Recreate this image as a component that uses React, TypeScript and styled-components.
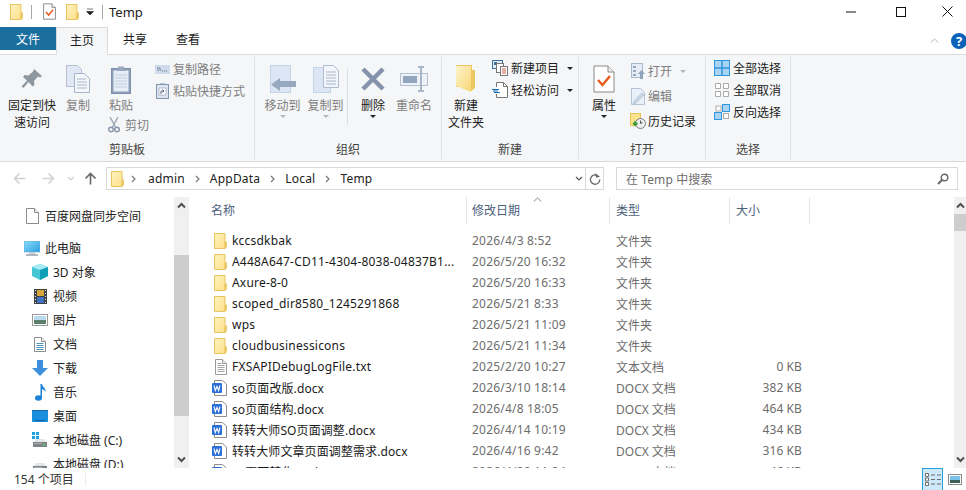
import React from "react";
import styled, { createGlobalStyle } from "styled-components";

const GlobalStyle = createGlobalStyle`
    html, body {
        margin: 0;
        padding: 0;
        background: #fff;
    }
    body {
        font-family: "Noto Sans", "Noto Sans CJK SC", sans-serif;
        font-size: 12px;
        color: #1a1a1a;
    }
    svg {
        display: block;
        flex: none;
    }
`;

const Window = styled.div`
    width: 966px;
    height: 490px;
    display: flex;
    flex-direction: column;
    overflow: hidden;
    background: #fff;
`;

const Spacer = styled.span<{ $w: number }>`
    width: ${(p) => p.$w}px;
    flex: none;
`;

/* title bar */
const TitleBar = styled.div`
    height: 23px;
    margin-bottom: 4px;
    flex: none;
    display: flex;
    align-items: center;
    padding-left: 10px;
`;

const QuickSep = styled.span<{ $ml: number; $mr: number }>`
    width: 1px;
    height: 14px;
    background: #a8a8a8;
    margin: 0 ${(p) => p.$mr}px 0 ${(p) => p.$ml}px;
`;

const TitleText = styled.span`
    font-size: 13px;
    color: #222;
    margin-left: -1px;
`;

const WindowButtons = styled.div`
    margin-left: auto;
    margin-right: -2px;
    display: flex;
`;

const WindowButton = styled.div<{ $w: number }>`
    width: ${(p) => p.$w}px;
    height: 23px;
    display: flex;
    align-items: center;
    justify-content: center;
`;

/* tabs */
const TabStrip = styled.div`
    height: 27px;
    flex: none;
    display: flex;
    align-items: flex-start;
`;

const FileTab = styled.div`
    width: 56px;
    height: 23px;
    background: #1a6f9f;
    color: #fff;
    display: flex;
    align-items: center;
    justify-content: center;
`;

const Tab = styled.div<{ $active?: boolean; $w: number }>`
    width: ${(p) => p.$w}px;
    height: 28px;
    box-sizing: border-box;
    display: flex;
    align-items: center;
    justify-content: center;
    padding-bottom: 4px;
    background: ${(p) => (p.$active ? "#f5f6f7" : "transparent")};
    border: ${(p) => (p.$active ? "1px solid #dadbdc" : "none")};
    border-bottom: none;
    position: relative;
    z-index: 1;
`;

const RibbonTools = styled.div`
    margin-left: auto;
    height: 27px;
    display: flex;
    align-items: center;
    gap: 11px;
`;

const HelpDot = styled.div`
    width: 16px;
    height: 16px;
    border-radius: 50%;
    background: #0b63b8;
    color: #fff;
    font-size: 13px;
    font-weight: 700;
    line-height: 16px;
    text-align: center;
    position: relative;
    left: 1px;
`;

/* ribbon */
const Ribbon = styled.div`
    height: 108px;
    flex: none;
    box-sizing: border-box;
    display: flex;
    background: #f5f6f7;
    border-top: 1px solid #dadbdc;
    border-bottom: 1px solid #dadbdc;
    padding: 2px 0;
`;

const Group = styled.div<{ $w: number }>`
    width: ${(p) => p.$w}px;
    flex: none;
    box-sizing: border-box;
    display: flex;
    flex-direction: column;
    border-right: 1px solid #e1e2e3;
`;

const GroupBody = styled.div<{ $pl?: number }>`
    flex: 1;
    display: flex;
    padding-left: ${(p) => p.$pl ?? 0}px;
    min-height: 0;
`;

const GroupLabel = styled.div`
    height: 19px;
    flex: none;
    line-height: 19px;
    text-align: center;
    color: #444;
`;

const Large = styled.div<{ $w: number; $off?: boolean }>`
    width: ${(p) => p.$w}px;
    flex: none;
    display: flex;
    flex-direction: column;
    align-items: center;
    color: ${(p) => (p.$off ? "#7e7e7e" : "#222")};
    line-height: 17px;
    text-align: center;
    white-space: nowrap;
`;

const LargeIcon = styled.div`
    height: 34px;
    margin-top: 5px;
    margin-bottom: 1px;
    display: flex;
    align-items: center;
    justify-content: center;
`;

const Caret = styled.span<{ $off?: boolean }>`
    display: block;
    width: 0;
    height: 0;
    margin-top: 1px;
    border-left: 3px solid transparent;
    border-right: 3px solid transparent;
    border-top: 3px solid ${(p) => (p.$off ? "#b5b5b5" : "#222")};
`;

const InlineCaret = styled(Caret)`
    margin: 0 0 0 5px;
`;

const Stack = styled.div<{ $gap: number; $pt: number; $ml?: number }>`
    display: flex;
    flex-direction: column;
    gap: ${(p) => p.$gap}px;
    padding-top: ${(p) => p.$pt}px;
    margin-left: ${(p) => p.$ml ?? 0}px;
`;

const SmallButton = styled.div<{ $off?: boolean; $gap?: number }>`
    display: flex;
    align-items: center;
    height: 18px;
    gap: ${(p) => p.$gap ?? 3}px;
    color: ${(p) => (p.$off ? "#7e7e7e" : "#222")};
    white-space: nowrap;
`;

const SmallIcon = styled.span<{ $w: number }>`
    width: ${(p) => p.$w}px;
    flex: none;
    display: flex;
    justify-content: center;
`;

const PasteColumn = styled.div`
    display: flex;
    flex-direction: column;
    width: 44px;
`;

const CutButton = styled(SmallButton)`
    margin: 2px 0 0 8px;
`;

const VRule = styled.div`
    width: 1px;
    height: 56px;
    margin-top: 12px;
    background: #dcdddf;
    flex: none;
`;

/* address row */
const AddressRow = styled.div`
    height: 35px;
    flex: none;
    display: flex;
    align-items: flex-start;
    padding-top: 5px;
    box-sizing: border-box;
`;

const NavArrows = styled.div`
    width: 106px;
    height: 23px;
    flex: none;
    display: flex;
    align-items: center;
    padding-left: 13px;
    box-sizing: border-box;
`;

const NavArrow = styled.span<{ $w: number }>`
    width: ${(p) => p.$w}px;
    display: flex;
    justify-content: flex-start;
`;

const AddressBox = styled.div`
    width: 480px;
    height: 23px;
    box-sizing: border-box;
    border: 1px solid #d9d9d9;
    display: flex;
    align-items: center;
    padding: 0 2px 0 4px;
    color: #222;
`;

const Crumb = styled.span<{ $ml: number }>`
    margin-left: ${(p) => p.$ml}px;
    letter-spacing: 0.2px;
`;

const Chevron = styled.span<{ $ml: number }>`
    margin-left: ${(p) => p.$ml}px;
    display: flex;
`;

const HistoryDrop = styled.span`
    margin-left: auto;
    display: flex;
`;

const RefreshBox = styled.div`
    width: 18px;
    height: 23px;
    box-sizing: border-box;
    border: 1px solid #d9d9d9;
    border-left: none;
    display: flex;
    align-items: center;
    justify-content: center;
`;

const SearchBox = styled.div`
    width: 342px;
    height: 23px;
    margin-left: 12px;
    box-sizing: border-box;
    border: 1px solid #d9d9d9;
    display: flex;
    align-items: center;
    justify-content: space-between;
    padding: 0 8px 0 9px;
    color: #6d6d6d;
    letter-spacing: 0.1px;
`;

/* body */
const Body = styled.div`
    flex: 1;
    display: flex;
    min-height: 0;
`;

const NavPane = styled.div`
    width: 174px;
    flex: none;
    padding-top: 7px;
    overflow: hidden;
`;

const NavRow = styled.div<{ $indent: number; $gap: number; $mb?: number }>`
    height: 24px;
    display: flex;
    align-items: center;
    gap: ${(p) => p.$gap}px;
    padding-left: ${(p) => p.$indent}px;
    margin-bottom: ${(p) => p.$mb ?? 0}px;
    white-space: nowrap;
    color: #222;
`;

const NavIconBox = styled.span`
    width: 16px;
    flex: none;
    display: flex;
    justify-content: center;
`;

const ScrollBar = styled.div<{ $w: number }>`
    width: ${(p) => p.$w}px;
    flex: none;
    background: #f0f0f0;
    display: flex;
    flex-direction: column;
    align-items: center;
    overflow: hidden;
`;

const ScrollEnd = styled.div`
    height: 17px;
    flex: none;
    display: flex;
    align-items: center;
    justify-content: center;
`;

const ScrollTrack = styled.div<{ $top: number }>`
    flex: 1;
    width: 100%;
    padding-top: ${(p) => p.$top}px;
    box-sizing: border-box;
`;

const Thumb = styled.div<{ $h: number }>`
    height: ${(p) => p.$h}px;
    background: #cdcdcd;
`;

const ListPane = styled.div`
    flex: 1;
    margin-left: 15px;
    display: flex;
    flex-direction: column;
    overflow: hidden;
    min-width: 0;
`;

const HeaderRow = styled.div`
    height: 27px;
    flex: none;
    display: flex;
    color: #4c607a;
`;

const HeaderCell = styled.div<{ $w: number; $pl: number }>`
    width: ${(p) => p.$w}px;
    flex: none;
    box-sizing: border-box;
    border-right: 1px solid #e5e5e5;
    padding-left: ${(p) => p.$pl}px;
    line-height: 27px;
    position: relative;
`;

const SortMark = styled.span`
    position: absolute;
    left: 66px;
    top: 0;
`;

const Rows = styled.div`
    padding-top: 6px;
`;

const FileRow = styled.div`
    height: 21px;
    display: flex;
    align-items: center;
    color: #6d6d6d;
    white-space: nowrap;
`;

const NameCell = styled.div<{ $kind: FileItem["kind"] }>`
    width: 262px;
    flex: none;
    box-sizing: border-box;
    display: flex;
    align-items: center;
    padding-left: ${(p) => (p.$kind === "word" ? 8 : p.$kind === "text" ? 11 : 10)}px;
    gap: 5px;
    color: #1a1a1a;
    letter-spacing: ${(p) => (p.$kind === "word" ? 0.1 : 0.2)}px;
`;

const Cell = styled.div<{ $w: number; $latin?: boolean }>`
    width: ${(p) => p.$w}px;
    flex: none;
    box-sizing: border-box;
    padding-left: 6px;
    letter-spacing: ${(p) => (p.$latin ? 0.2 : 0)}px;
`;

const SizeCell = styled.div`
    width: 80px;
    flex: none;
    box-sizing: border-box;
    padding-right: 8px;
    text-align: right;
    letter-spacing: 0.1px;
`;

/* status bar */
const StatusBar = styled.div`
    height: 22px;
    flex: none;
    display: flex;
    align-items: center;
    padding-left: 14px;
    color: #333;
`;

const StatusSep = styled.span`
    width: 1px;
    height: 14px;
    background: #ececec;
    margin-left: 11px;
`;

const ViewButtons = styled.div`
    margin-left: auto;
    display: flex;
    align-items: center;
    gap: 4px;
    padding-right: 4px;
    height: 100%;
`;

const ViewButton = styled.div<{ $active?: boolean }>`
    width: ${(p) => (p.$active ? 21 : 15)}px;
    height: 22px;
    box-sizing: border-box;
    display: flex;
    align-items: center;
    justify-content: center;
    background: ${(p) => (p.$active ? "#cde8f8" : "transparent")};
    border: ${(p) => (p.$active ? "1px solid #26a0da" : "none")};
    border-bottom: none;
`;

/* ---- drawings ---- */
const FolderIcon = () => (
    <svg width="13" height="16" viewBox="0 0 13 16">
        <defs>
            <linearGradient id="fg" x1="0" y1="0" x2="1" y2="1">
                <stop offset="0" stopColor="#fff3bf" />
                <stop offset="1" stopColor="#fde08a" />
            </linearGradient>
        </defs>
        <path d="M.5.5h10.5v15H.5z" fill="url(#fg)" stroke="#e6c45f" />
        <path d="M11 9.5l1.5-1V14L11 15.5z" fill="#f4cf60" stroke="#e6c45f" strokeWidth=".8" />
    </svg>
);

const NewFolderIcon = () => (
    <svg width="20" height="28" viewBox="0 0 20 28">
        <defs>
            <linearGradient id="nf" x1="0" y1="0" x2="1" y2="1">
                <stop offset="0" stopColor="#fdf4cc" />
                <stop offset="1" stopColor="#f8d675" />
            </linearGradient>
        </defs>
        <path d="M0 0h16v5h3v18l-5 4V22H0z" fill="#edc65e" />
        <path d="M0 1h15l0 26-15-6z" fill="url(#nf)" />
    </svg>
);

const PropertiesIcon = ({ small }: { small?: boolean }) => (
    <svg width={small ? 13 : 22} height={small ? 17 : 28} viewBox="0 0 22 28">
        <path d="M1 1h14l6 6v20H1z" fill="#fff" stroke="#8a8a8a" strokeWidth={small ? 1.6 : 1} />
        <path d="M15 1v6h6" fill="#eee" stroke="#8a8a8a" strokeWidth={small ? 1.6 : 1} />
        <path d="M5 15l4.5 5L17 11" fill="none" stroke="#e8591c" strokeWidth="2.4" />
    </svg>
);

const PinIcon = () => (
    <svg width="22" height="22" viewBox="0 0 22 22">
        <path d="M13 1l8 7-2 1.5-2-1-4 4.500.5 4-2 1.500-4-4.500-5 6-2-1.500 5.500-6L2 9l1.500-2 4 .5L12 3.500z" fill="#8e979f" />
    </svg>
);

const CopyIcon = () => (
    <svg width="24" height="28" viewBox="0 0 24 28">
        <path d="M.5.5h11l4 4v17H.5z" fill="#dfe8f4" stroke="#b5c1d3" />
        <path d="M8.500 8.500h10l5 5v14h-15z" fill="#f3f6fb" stroke="#a6b4ca" />
        <path d="M11 14h9M11 17h10M11 20h10M11 23h10" stroke="#a9b6c9" />
    </svg>
);

const ClipboardIcon = () => (
    <svg width="20" height="29" viewBox="0 0 20 29">
        <rect x=".5" y="3.500" width="19" height="25" fill="#8e9fb8" stroke="#7f90aa" />
        <rect x="2.500" y="5.500" width="15" height="21" fill="#e6edf7" />
        <path d="M4 10h12M4 13h12M4 16h12M4 19h12M4 22h12" stroke="#c3cfdf" />
        <path d="M7 4V1.500h6V4l2 2H5z" fill="#9aa8bd" />
    </svg>
);

const ScissorsIcon = () => (
    <svg width="12" height="16" viewBox="0 0 12 16">
        <path d="M2 0l5.500 10M10 0L4.500 10" stroke="#9aa6b5" strokeWidth="1.400" fill="none" />
        <circle cx="3" cy="12.500" r="2.300" fill="none" stroke="#8696ac" strokeWidth="1.400" />
        <circle cx="9" cy="12.500" r="2.300" fill="none" stroke="#8696ac" strokeWidth="1.400" />
    </svg>
);

const CopyPathIcon = () => (
    <svg width="15" height="9" viewBox="0 0 15 9">
        <rect width="15" height="9" fill="#cfdaea" />
        <path d="M2.500 2l1 4M4.500 2l1 4" stroke="#66788f" strokeWidth=".8" />
        <path d="M7 6h1M9 6h1M11 6h1" stroke="#66788f" />
    </svg>
);

const PasteShortcutIcon = () => (
    <svg width="13" height="16" viewBox="0 0 13 16">
        <rect x=".5" y="1.500" width="12" height="14" fill="#dfe6f1" stroke="#8295b0" />
        <path d="M4 2V.5h5V2z" fill="#8295b0" />
        <rect x="3" y="5" width="7" height="7" fill="#fff" stroke="#8c9bb2" strokeWidth=".6" />
        <path d="M5 11V8h3M6.500 6.500L8 8 6.500 9.500" stroke="#56677f" fill="none" />
    </svg>
);

const MoveToIcon = () => (
    <svg width="26" height="29" viewBox="0 0 26 29">
        <rect x=".5" y=".5" width="20" height="27" fill="#dbe5f3" stroke="#c6d4e8" />
        <path d="M10 14l-9 6.500L10 27v-4h16v-6H10z" fill="#97a8bf" transform="translate(0 -1)" />
    </svg>
);

const CopyToIcon = () => (
    <svg width="26" height="29" viewBox="0 0 26 29">
        <rect x=".5" y="2.500" width="17" height="25" fill="#dbe5f3" stroke="#c6d4e8" />
        <path d="M10.500.5h10l5 5v17h-15z" fill="#f2f5fa" stroke="#b0bdd0" />
        <path d="M13 7h10M13 10h10M13 13h10M13 16h10M13 19h10" stroke="#aab7ca" />
    </svg>
);

const DeleteIcon = () => (
    <svg width="26" height="26" viewBox="0 0 26 26">
        <path d="M3 3l20 20M23 3L3 23" stroke="#8492ab" strokeWidth="4.500" />
    </svg>
);

const RenameIcon = () => (
    <svg width="28" height="26" viewBox="0 0 28 26">
        <rect x=".5" y="7.500" width="27" height="12" fill="#eef2f8" stroke="#b4c1d3" />
        <rect x="3" y="10" width="14" height="7" fill="#93a6c0" />
        <path d="M18 1h6M18 25h6M21 1v24" stroke="#a9b6c9" strokeWidth="2" />
    </svg>
);

const NewItemIcon = () => (
    <svg width="16" height="16" viewBox="0 0 16 16">
        <rect x=".5" y=".5" width="10" height="8" fill="#e6eef8" stroke="#3f6f9f" />
        <rect x="2" y="2" width="3" height="3" fill="#3f6f9f" />
        <rect x="4.500" y="3.500" width="7" height="9" fill="#fff" stroke="#777" />
        <rect x="8.500" y="6.500" width="7" height="9" fill="#fff" stroke="#777" />
        <path d="M10 9h4M10 11h4M10 13h4" stroke="#d0604a" />
    </svg>
);

const EasyAccessIcon = () => (
    <svg width="16" height="16" viewBox="0 0 16 16">
        <path d="M4.500 5V.5h7l4 4v11h-11V12" fill="#fff" stroke="#777" />
        <path d="M11.500.5v4h4" fill="none" stroke="#777" />
        <path d="M0 7.500h7M2 10.500h6M1 9h5" stroke="#1a6fb5" />
    </svg>
);

const OpenIcon = () => (
    <svg width="14" height="16" viewBox="0 0 14 16">
        <rect x=".5" y=".5" width="11" height="14" fill="#e5ecf5" stroke="#a9b8cc" />
        <path d="M2 3h3v2H2zM2 7h3v2H2zM2 11h3v2H2z" fill="#97a7bc" />
        <path d="M10.500 7l3.500 4h-2v5H9v-5H7z" fill="#8fa3bd" />
    </svg>
);

const EditIcon = () => (
    <svg width="14" height="17" viewBox="0 0 14 17">
        <path d="M.5.5h9l4 4v12H.5z" fill="#eaf0f8" stroke="#b6c3d5" />
        <path d="M11 5l2 2-8 8-3 1 1-3z" fill="#c9d6e7" stroke="#aebcd0" strokeWidth=".7" />
    </svg>
);

const HistoryIcon = () => (
    <svg width="16" height="16" viewBox="0 0 16 16">
        <rect x=".5" y=".5" width="10" height="12" fill="#fbe28b" stroke="#e3c35a" />
        <circle cx="10.500" cy="10.500" r="5" fill="#eceef0" stroke="#7d7d7d" />
        <path d="M10.500 7.500v3l2-1" stroke="#555" fill="none" />
        <path d="M2.500 10.500l3-3v2h2v2.500h-2v2z" fill="#2e9e2e" />
    </svg>
);

const SelectAllIcon = () => (
    <svg width="16" height="16" viewBox="0 0 16 16">
        <rect x=".5" y=".5" width="15" height="15" fill="#a8d3f5" stroke="#2e97dd" />
        <path d="M8 0v16M0 8h16" stroke="#2e97dd" strokeWidth="1.500" />
    </svg>
);

const SelectNoneIcon = () => (
    <svg width="14" height="14" viewBox="0 0 14 14">
        <path d="M.5.5h5v5h-5zM8.500.5h5v5h-5zM.5 8.500h5v5h-5zM8.500 8.500h5v5h-5z" fill="#fff" stroke="#ababab" />
    </svg>
);

const InvertIcon = () => (
    <svg width="16" height="16" viewBox="0 0 16 16">
        <rect x="8.500" y=".5" width="7" height="7" fill="#a8d3f5" stroke="#2e97dd" />
        <rect x=".5" y="8.500" width="7" height="7" fill="#a8d3f5" stroke="#2e97dd" />
        <rect x="2" y="2" width="5" height="5" fill="#fff" stroke="#ababab" />
        <rect x="9.500" y="9.500" width="5" height="5" fill="#fff" stroke="#ababab" />
    </svg>
);

const ChevronRight = () => (
    <svg width="5" height="8" viewBox="0 0 5 8">
        <path d="M1 1l3 3-3 3" fill="none" stroke="#777" strokeWidth="1.200" />
    </svg>
);

const arrowPaths = {
    left: "M6.500 1.500l-5 5 5 5M1.500 6.500h11",
    right: "M6.500 1.500l5 5-5 5M11.500 6.500H.5",
    up: "M1.500 6.500l5-5 5 5M6.500 1.500v11"
};

const ArrowIcon = ({ dir, color }: { dir: keyof typeof arrowPaths; color: string }) => (
    <svg width="13" height="13" viewBox="0 0 13 13">
        <path d={arrowPaths[dir]} fill="none" stroke={color} strokeWidth="1.600" />
    </svg>
);

const SmallDown = ({ color }: { color: string }) => (
    <svg width="8" height="5" viewBox="0 0 8 5">
        <path d="M1 1l3 3 3-3" fill="none" stroke={color} strokeWidth="1.200" />
    </svg>
);

const RefreshIcon = () => (
    <svg width="12" height="13" viewBox="0 0 12 13">
        <path d="M8.500 3.500A4.700 4.700 0 1 0 10.800 7.500" fill="none" stroke="#666" strokeWidth="1.300" />
        <path d="M6.500 .5v5h4z" fill="#666" transform="rotate(-15 8 3)" />
    </svg>
);

const SearchIcon = () => (
    <svg width="12" height="12" viewBox="0 0 12 12">
        <circle cx="7.500" cy="4.500" r="3.300" fill="none" stroke="#666" strokeWidth="1.400" />
        <path d="M5 7l-4 4" stroke="#666" strokeWidth="2" />
    </svg>
);

const BlankDocIcon = () => (
    <svg width="13" height="16" viewBox="0 0 13 16">
        <path d="M.5.5h8l4 4v11H.5z" fill="#fff" stroke="#8d8d8d" />
        <path d="M8.500.5v4h4" fill="#f1f1f1" stroke="#8d8d8d" />
    </svg>
);

const MonitorIcon = () => (
    <svg width="16" height="15" viewBox="0 0 16 15">
        <defs>
            <linearGradient id="mo" x1="0" y1="0" x2="1" y2="1">
                <stop offset="0" stopColor="#8edcf8" />
                <stop offset="1" stopColor="#2a9fe0" />
            </linearGradient>
        </defs>
        <rect width="16" height="11" fill="url(#mo)" stroke="#5aa9d6" strokeWidth=".6" />
        <rect x="5" y="11" width="6" height="2" fill="#c9ced4" />
        <rect x="2" y="13" width="12" height="2" fill="#aeb6be" />
    </svg>
);

const CubeIcon = () => (
    <svg width="16" height="16" viewBox="0 0 16 16">
        <path d="M8 0l8 3v9l-8 4-8-4V3z" fill="#47c7d6" />
        <path d="M8 0l8 3-8 3-8-3z" fill="#a6ecf2" />
        <path d="M8 6l8-3v9l-8 4z" fill="#0e9fb5" />
    </svg>
);

const FilmIcon = () => (
    <svg width="13" height="15" viewBox="0 0 13 15">
        <rect width="13" height="15" fill="#3b4045" />
        <rect x="3" y="1" width="7" height="6" fill="#d8a53a" />
        <rect x="3" y="8" width="7" height="6" fill="#3f73c2" />
        <path d="M1 1h1v1H1zM1 4h1v1H1zM1 7h1v1H1zM1 10h1v1H1zM1 13h1v1H1zM11 1h1v1h-1zM11 4h1v1h-1zM11 7h1v1h-1zM11 10h1v1h-1zM11 13h1v1h-1z" fill="#eee" />
    </svg>
);

const PictureIcon = () => (
    <svg width="16" height="12" viewBox="0 0 16 12">
        <rect x=".5" y=".5" width="15" height="11" fill="#fff" stroke="#9a9a9a" />
        <rect x="2" y="2" width="12" height="4" fill="#b9dcf0" />
        <rect x="2" y="6" width="12" height="4" fill="#5b7f6a" />
    </svg>
);

const TextDocIcon = () => (
    <svg width="12" height="15" viewBox="0 0 12 15">
        <path d="M.5.5h7l4 4v10H.5z" fill="#fff" stroke="#8d8d8d" />
        <path d="M7.500.5v4h4" fill="#f1f1f1" stroke="#8d8d8d" />
        <path d="M2.500 6.500h7M2.500 8.500h7M2.500 10.500h7M2.500 12.500h7" stroke="#4a90b8" />
    </svg>
);

const DownloadIcon = () => (
    <svg width="16" height="16" viewBox="0 0 16 16">
        <path d="M5 0h6v8h5l-8 8-8-8h5z" fill="#3d8edc" />
    </svg>
);

const MusicIcon = () => (
    <svg width="11" height="17" viewBox="0 0 11 17">
        <ellipse cx="3.500" cy="14" rx="3.500" ry="2.800" fill="#1a82d8" />
        <path d="M5.500 14V0H7c.5 3 3.500 4 4 7.500C9.500 6 8 5.500 7 5v9z" fill="#1a82d8" />
    </svg>
);

const DesktopIcon = () => (
    <svg width="16" height="12" viewBox="0 0 16 12">
        <rect width="16" height="12" fill="#1b8fde" />
        <rect width="16" height="1" fill="#1468ac" />
        <rect x="3" y="10" width="10" height="1" fill="#0d5f9e" />
    </svg>
);

const DriveIcon = ({ win }: { win?: boolean }) => (
    <svg width="16" height="16" viewBox="0 0 16 16">
        {win && <path d="M0 0h3v3H0zM4 0h3v3H4zM0 4h3v3H0zM4 4h3v3H4z" fill="#1ba1e2" />}
        <path d="M2 10l1.500-3h9L14 10z" fill="#e3e5e7" />
        <rect x="1" y="10" width="14" height="5" fill="#7d8286" />
        <rect x="2" y="11" width="8" height="1" fill="#aab0b4" />
        <rect x="11" y="12" width="2" height="1.500" fill="#57d35b" />
    </svg>
);

const SmallTextIcon = () => (
    <svg width="12" height="16" viewBox="0 0 12 16">
        <path d="M.5.5h7l4 4v11H.5z" fill="#fff" stroke="#9a9a9a" />
        <path d="M7.500.5v4h4" fill="#eee" stroke="#9a9a9a" />
        <path d="M2.500 4.500h4M2.500 6.500h7M2.500 8.500h7M2.500 10.500h7M2.500 12.500h7" stroke="#a5a5a5" />
    </svg>
);

const WordIcon = () => (
    <svg width="15" height="16" viewBox="0 0 15 16">
        <path d="M2.500.5h8l4 3.500v11.500h-12z" fill="#fff" stroke="#8d8d8d" />
        <rect y="3" width="10" height="10" rx="1" fill="#2b6fd8" />
        <path d="M2 5.500l1.300 5 1.700-4 1.700 4 1.300-5" fill="none" stroke="#fff" strokeWidth="1.100" />
    </svg>
);

const DetailsViewIcon = () => (
    <svg width="16" height="13" viewBox="0 0 16 13">
        <path d="M.5.5h3v3h-3zM.5 5h3v3h-3zM.5 9.500h3v3h-3z" fill="#fff" stroke="#6d6d6d" />
        <path d="M6 2h4M12 2h4M6 6.500h4M12 6.500h4M6 11h4M12 11h4" stroke="#6d6d6d" />
    </svg>
);

const PreviewViewIcon = () => (
    <svg width="14" height="11" viewBox="0 0 14 11">
        <rect x=".5" y=".5" width="13" height="10" fill="#fff" stroke="#8d8d8d" />
        <rect x="2" y="2" width="10" height="4" fill="#7cc0ec" />
        <rect x="2" y="6" width="10" height="3" fill="#3d5f58" />
    </svg>
);

const SortUp = ({ color = "#8a8a8a" }: { color?: string }) => (
    <svg width="9" height="6" viewBox="0 0 9 6">
        <path d="M.7 4.500L4.500 1l3.800 3.500" fill="none" stroke={color} />
    </svg>
);

const ScrollChevron = ({ down }: { down?: boolean }) => (
    <svg width="9" height="7" viewBox="0 0 9 7">
        <path d={down ? "M1 1.500L4.500 5 8 1.500" : "M1 5.500L4.500 2 8 5.500"} fill="none" stroke="#505050" strokeWidth="2" />
    </svg>
);

/* ---- data ---- */
type FileItem = { name: string; date: string; type: string; size?: string; kind: "folder" | "text" | "word" };

const files: FileItem[] = [
    { name: "kccsdkbak", date: "2026/4/3 8:52", type: "文件夹", kind: "folder" },
    { name: "A448A647-CD11-4304-8038-04837B1...", date: "2026/5/20 16:32", type: "文件夹", kind: "folder" },
    { name: "Axure-8-0", date: "2026/5/20 16:33", type: "文件夹", kind: "folder" },
    { name: "scoped_dir8580_1245291868", date: "2026/5/21 8:33", type: "文件夹", kind: "folder" },
    { name: "wps", date: "2026/5/21 11:09", type: "文件夹", kind: "folder" },
    { name: "cloudbusinessicons", date: "2026/5/21 11:34", type: "文件夹", kind: "folder" },
    { name: "FXSAPIDebugLogFile.txt", date: "2025/2/20 10:27", type: "文本文档", size: "0 KB", kind: "text" },
    { name: "so页面改版.docx", date: "2026/3/10 18:14", type: "DOCX 文档", size: "382 KB", kind: "word" },
    { name: "so页面结构.docx", date: "2026/4/8 18:05", type: "DOCX 文档", size: "464 KB", kind: "word" },
    { name: "转转大师SO页面调整.docx", date: "2026/4/14 10:19", type: "DOCX 文档", size: "434 KB", kind: "word" },
    { name: "转转大师文章页面调整需求.docx", date: "2026/4/16 9:42", type: "DOCX 文档", size: "316 KB", kind: "word" },
    { name: "so页面转化03.docx", date: "2026/4/28 11:24", type: "DOCX 文档", size: "46 KB", kind: "word" }
];

const navItems: { label: string; icon: React.ReactNode }[] = [
    { label: "3D 对象", icon: <CubeIcon /> },
    { label: "视频", icon: <FilmIcon /> },
    { label: "图片", icon: <PictureIcon /> },
    { label: "文档", icon: <TextDocIcon /> },
    { label: "下载", icon: <DownloadIcon /> },
    { label: "音乐", icon: <MusicIcon /> },
    { label: "桌面", icon: <DesktopIcon /> },
    { label: "本地磁盘 (C:)", icon: <DriveIcon win /> },
    { label: "本地磁盘 (D:)", icon: <DriveIcon /> }
];

export default function App() {
    return (
        <Window>
            <GlobalStyle />
            <TitleBar>
                <FolderIcon />
                <QuickSep $ml={8} $mr={11} />
                <PropertiesIcon small />
                <Spacer $w={10} />
                <FolderIcon />
                <Spacer $w={7} />
                <svg width="8" height="8" viewBox="0 0 8 8">
                    <path d="M1 1h6M.5 3.500h7L4 7z" fill="#222" stroke="#222" strokeWidth=".6" />
                </svg>
                <QuickSep $ml={8} $mr={7} />
                <TitleText>Temp</TitleText>
                <WindowButtons>
                    <WindowButton $w={50}>
                        <svg width="10" height="2" viewBox="0 0 10 2">
                            <path d="M0 1h10" stroke="#111" />
                        </svg>
                    </WindowButton>
                    <WindowButton $w={50}>
                        <svg width="10" height="10" viewBox="0 0 10 10">
                            <rect x=".5" y=".5" width="9" height="9" fill="none" stroke="#111" />
                        </svg>
                    </WindowButton>
                    <WindowButton $w={42}>
                        <svg width="11" height="11" viewBox="0 0 11 11">
                            <path d="M.5.5l10 10M10.500.5l-10 10" stroke="#111" />
                        </svg>
                    </WindowButton>
                </WindowButtons>
            </TitleBar>

            <TabStrip>
                <FileTab>文件</FileTab>
                <Tab $w={52} $active>主页</Tab>
                <Tab $w={54}>共享</Tab>
                <Tab $w={52}>查看</Tab>
                <RibbonTools>
                    <SortUp color="#b4b4b4" />
                    <HelpDot>?</HelpDot>
                </RibbonTools>
            </TabStrip>

            <Ribbon>
                <Group $w={255}>
                    <GroupBody $pl={8}>
                        <Large $w={48}>
                            <LargeIcon><PinIcon /></LargeIcon>
                            固定到快
                            <br />
                            速访问
                        </Large>
                        <Large $w={44} $off>
                            <LargeIcon><CopyIcon /></LargeIcon>
                            复制
                        </Large>
                        <PasteColumn>
                            <Large $w={42} $off>
                                <LargeIcon><ClipboardIcon /></LargeIcon>
                                粘贴
                            </Large>
                            <CutButton $off $gap={5}>
                                <ScissorsIcon />
                                <span>剪切</span>
                            </CutButton>
                        </PasteColumn>
                        <Stack $gap={4} $pt={3} $ml={10}>
                            <SmallButton $off>
                                <SmallIcon $w={16}><CopyPathIcon /></SmallIcon>
                                <span>复制路径</span>
                            </SmallButton>
                            <SmallButton $off>
                                <SmallIcon $w={16}><PasteShortcutIcon /></SmallIcon>
                                <span>粘贴快捷方式</span>
                            </SmallButton>
                        </Stack>
                    </GroupBody>
                    <GroupLabel>剪贴板</GroupLabel>
                </Group>

                <Group $w={187}>
                    <GroupBody $pl={6}>
                        <Large $w={43} $off>
                            <LargeIcon><MoveToIcon /></LargeIcon>
                            移动到
                            <Caret $off />
                        </Large>
                        <Large $w={43} $off>
                            <LargeIcon><CopyToIcon /></LargeIcon>
                            复制到
                            <Caret $off />
                        </Large>
                        <VRule />
                        <Large $w={50}>
                            <LargeIcon><DeleteIcon /></LargeIcon>
                            删除
                            <Caret />
                        </Large>
                        <Large $w={32} $off>
                            <LargeIcon><RenameIcon /></LargeIcon>
                            重命名
                        </Large>
                    </GroupBody>
                    <GroupLabel>组织</GroupLabel>
                </Group>

                <Group $w={137}>
                    <GroupBody $pl={3}>
                        <Large $w={42}>
                            <LargeIcon><NewFolderIcon /></LargeIcon>
                            新建
                            <br />
                            文件夹
                        </Large>
                        <Stack $gap={4} $pt={2} $ml={5}>
                            <SmallButton>
                                <NewItemIcon />
                                <span>新建项目</span>
                                <InlineCaret />
                            </SmallButton>
                            <SmallButton>
                                <EasyAccessIcon />
                                <span>轻松访问</span>
                                <InlineCaret />
                            </SmallButton>
                        </Stack>
                    </GroupBody>
                    <GroupLabel>新建</GroupLabel>
                </Group>

                <Group $w={127}>
                    <GroupBody $pl={5}>
                        <Large $w={40}>
                            <LargeIcon><PropertiesIcon /></LargeIcon>
                            属性
                            <Caret />
                        </Large>
                        <Stack $gap={7} $pt={5} $ml={6}>
                            <SmallButton $off>
                                <SmallIcon $w={15}><OpenIcon /></SmallIcon>
                                <span>打开</span>
                                <InlineCaret $off />
                            </SmallButton>
                            <SmallButton $off>
                                <SmallIcon $w={15}><EditIcon /></SmallIcon>
                                <span>编辑</span>
                            </SmallButton>
                            <SmallButton>
                                <SmallIcon $w={15}><HistoryIcon /></SmallIcon>
                                <span>历史记录</span>
                            </SmallButton>
                        </Stack>
                    </GroupBody>
                    <GroupLabel>打开</GroupLabel>
                </Group>

                <Group $w={85}>
                    <GroupBody $pl={8}>
                        <Stack $gap={4} $pt={2}>
                            <SmallButton>
                                <SmallIcon $w={16}><SelectAllIcon /></SmallIcon>
                                <span>全部选择</span>
                            </SmallButton>
                            <SmallButton>
                                <SmallIcon $w={16}><SelectNoneIcon /></SmallIcon>
                                <span>全部取消</span>
                            </SmallButton>
                            <SmallButton>
                                <SmallIcon $w={16}><InvertIcon /></SmallIcon>
                                <span>反向选择</span>
                            </SmallButton>
                        </Stack>
                    </GroupBody>
                    <GroupLabel>选择</GroupLabel>
                </Group>
            </Ribbon>

            <AddressRow>
                <NavArrows>
                    <NavArrow $w={29}><ArrowIcon dir="left" color="#d2d2d2" /></NavArrow>
                    <NavArrow $w={25}><ArrowIcon dir="right" color="#d2d2d2" /></NavArrow>
                    <NavArrow $w={17}><SmallDown color="#cfcfcf" /></NavArrow>
                    <NavArrow $w={13}><ArrowIcon dir="up" color="#666" /></NavArrow>
                </NavArrows>
                <AddressBox>
                    <FolderIcon />
                    <Chevron $ml={7}><ChevronRight /></Chevron>
                    <Crumb $ml={12}>admin</Crumb>
                    <Chevron $ml={10}><ChevronRight /></Chevron>
                    <Crumb $ml={10}>AppData</Crumb>
                    <Chevron $ml={10}><ChevronRight /></Chevron>
                    <Crumb $ml={10}>Local</Crumb>
                    <Chevron $ml={10}><ChevronRight /></Chevron>
                    <Crumb $ml={10}>Temp</Crumb>
                    <HistoryDrop><SmallDown color="#555" /></HistoryDrop>
                </AddressBox>
                <RefreshBox><RefreshIcon /></RefreshBox>
                <SearchBox>
                    <span>在 Temp 中搜索</span>
                    <SearchIcon />
                </SearchBox>
            </AddressRow>

            <Body>
                <NavPane>
                    <NavRow $indent={26} $gap={6} $mb={8}>
                        <BlankDocIcon />
                        百度网盘同步空间
                    </NavRow>
                    <NavRow $indent={24} $gap={5}>
                        <MonitorIcon />
                        此电脑
                    </NavRow>
                    {navItems.map((item) => (
                        <NavRow key={item.label} $indent={32} $gap={5}>
                            <NavIconBox>{item.icon}</NavIconBox>
                            {item.label}
                        </NavRow>
                    ))}
                </NavPane>
                <ScrollBar $w={15}>
                    <ScrollEnd><ScrollChevron /></ScrollEnd>
                    <ScrollTrack $top={41}><Thumb $h={161} /></ScrollTrack>
                    <ScrollEnd><ScrollChevron down /></ScrollEnd>
                </ScrollBar>

                <ListPane>
                    <HeaderRow>
                        <HeaderCell $w={263} $pl={7}>名称</HeaderCell>
                        <HeaderCell $w={143} $pl={5}>
                            修改日期
                            <SortMark><SortUp /></SortMark>
                        </HeaderCell>
                        <HeaderCell $w={120} $pl={6}>类型</HeaderCell>
                        <HeaderCell $w={80} $pl={6}>大小</HeaderCell>
                    </HeaderRow>
                    <Rows>
                        {files.map((file) => (
                            <FileRow key={file.name}>
                                <NameCell $kind={file.kind}>
                                    {file.kind === "folder" && <FolderIcon />}
                                    {file.kind === "text" && <SmallTextIcon />}
                                    {file.kind === "word" && <WordIcon />}
                                    {file.name}
                                </NameCell>
                                <Cell $w={144} $latin>{file.date}</Cell>
                                <Cell $w={120}>{file.type}</Cell>
                                <SizeCell>{file.size}</SizeCell>
                            </FileRow>
                        ))}
                    </Rows>
                </ListPane>
                <ScrollBar $w={12}>
                    <ScrollEnd><ScrollChevron /></ScrollEnd>
                    <ScrollTrack $top={0}><Thumb $h={17} /></ScrollTrack>
                    <ScrollEnd><ScrollChevron down /></ScrollEnd>
                </ScrollBar>
            </Body>

            <StatusBar>
                154 个项目
                <StatusSep />
                <ViewButtons>
                    <ViewButton $active><DetailsViewIcon /></ViewButton>
                    <ViewButton><PreviewViewIcon /></ViewButton>
                </ViewButtons>
            </StatusBar>
        </Window>
    );
}
